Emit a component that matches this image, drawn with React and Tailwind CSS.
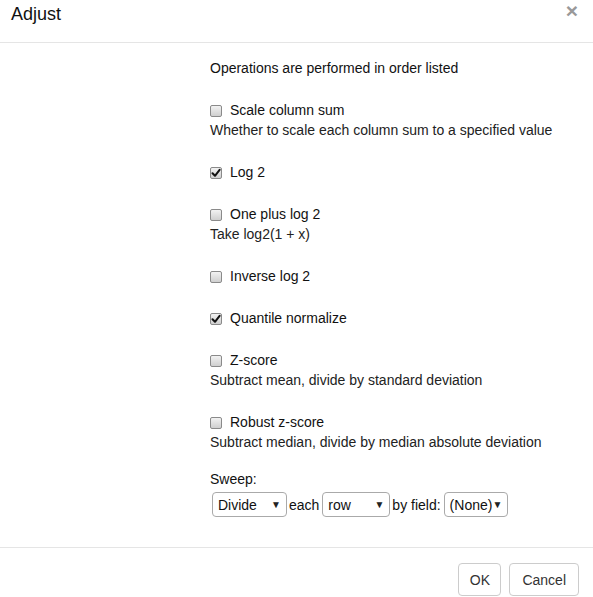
import { useState } from "react";

const items = [
  { label: "Scale column sum", desc: "Whether to scale each column sum to a specified value", checked: false },
  { label: "Log 2", checked: true },
  { label: "One plus log 2", desc: "Take log2(1 + x)", checked: false },
  { label: "Inverse log 2", checked: false },
  { label: "Quantile normalize", checked: true },
  { label: "Z-score", desc: "Subtract mean, divide by standard deviation", checked: false },
  { label: "Robust z-score", desc: "Subtract median, divide by median absolute deviation", checked: false },
];

function FakeSelect({ value, width }) {
  return (
    <div className={`flex items-center justify-between h-[25px] border border-[#aaa] rounded-[4px] pl-[5px] pr-[5px] bg-white ${width}`}>
      <span>{value}</span>
      <span className="text-[10px] text-[#222]">▼</span>
    </div>
  );
}

function Box({ checked, onClick }) {
  return (
    <span
      onClick={onClick}
      className="w-[12px] h-[12px] mt-[2px] mr-[8px] border border-[#8a8a8a] rounded-[2px] bg-linear-to-b from-[#f2f2f2] to-[#cfcfcf] flex items-center justify-center cursor-pointer"
    >
      {checked && (
        <svg width="10" height="10" viewBox="0 0 10 10">
          <path d="M1.5 5.2 L4 7.8 L8.6 1.8" fill="none" stroke="#111" strokeWidth="2" strokeLinecap="round" strokeLinejoin="round" />
        </svg>
      )}
    </span>
  );
}

export default function App() {
  const [checks, setChecks] = useState(items.map((i) => i.checked));

  return (
    <div className="w-[593px] h-[597px] bg-white text-[14px] leading-[20px] text-[#222] font-['Liberation_Sans',Arial,sans-serif] flex flex-col">
      <div className="h-[43px] border-b border-[#e5e5e5] flex items-start justify-between pl-[11px] pr-[15px]">
        <h4 className="text-[18px] leading-[26px] mt-[1px] text-[#111]">Adjust</h4>
        <span className="text-[21px] font-bold leading-[24px] text-[#999] mt-[-1px]">×</span>
      </div>

      <div className="flex-1 pl-[210px] pt-[15px]">
        <div className="mb-[22px] text-[#111]">Operations are performed in order listed</div>
        {items.map((item, i) => (
          <div key={item.label} className="mb-[22px]">
            <label className="flex items-center text-[#111]">
              <Box checked={checks[i]} onClick={() => setChecks(checks.map((c, j) => (j === i ? !c : c)))} />
              <span>{item.label}</span>
            </label>
            {item.desc && <div>{item.desc}</div>}
          </div>
        ))}
        <div className="mt-[-5px] text-[#111]">Sweep:</div>
        <div className="flex items-center mt-[3px] ml-[2px] text-[#111]">
          <FakeSelect value="Divide" width="w-[75px]" />
          <span className="ml-[2px] mr-[3px]">each</span>
          <FakeSelect value="row" width="w-[68px]" />
          <span className="ml-[2px] mr-[3px]">by field:</span>
          <FakeSelect value="(None)" width="w-[64px]" />
        </div>
      </div>

      <div className="h-[50px] border-t border-[#e5e5e5] flex items-start justify-end gap-[8px] pr-[14px] pt-[15px]">
        <button className="h-[33px] w-[43px] border border-[#ccc] rounded-[4px] bg-white text-[#333]">OK</button>
        <button className="h-[33px] px-[12px] border border-[#ccc] rounded-[4px] bg-white text-[#333]">Cancel</button>
      </div>
    </div>
  );
}
